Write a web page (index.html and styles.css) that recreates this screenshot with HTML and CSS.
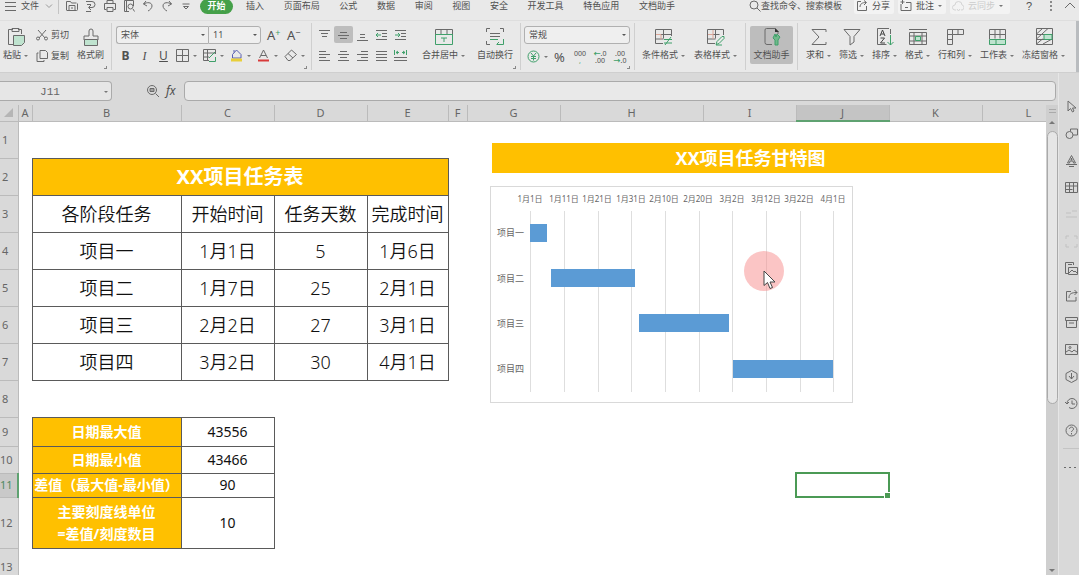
FILE: index.html
```
<!DOCTYPE html>
<html lang="zh-CN">
<head>
  <meta charset="UTF-8" />
  <meta name="viewport" content="width=device-width, initial-scale=1.0"/>
  <title>XX项目任务表</title>
  <link rel="stylesheet" href="styles.css">
</head>
<body>
  <div class="app">

    <header class="menu-bar">
      <button class="file-btn">
        <svg class="icon" width="12" height="12" viewBox="0 0 12 12"><path d="M0 2.500h11M0 6.500h11M0 10.500h11"/></svg>
        文件
        <svg class="icon light" width="8" height="8" viewBox="0 0 8 8"><path d="M1 2.500l3 3 3-3"/></svg>
      </button>
      <div class="quick-bar">
        <button aria-label="打开"><svg class="icon" width="12" height="12" viewBox="0 0 12 12"><path d="M.5 10V1.500h4l1 1.500h5M.5 10.500h10a1 1 0 0 0 1-1V3.500M3 10.500V5.500h6v5M5 8h2"/></svg></button>
        <button aria-label="输出"><svg class="icon" width="12" height="12" viewBox="0 0 12 12"><path d="M1 1.500h6a3 3 0 0 1 0 6H4M2 4.500h4M6 5L3.500 7.500 6 10M1 11.500h5"/></svg></button>
        <button aria-label="打印"><svg class="icon" width="12" height="12" viewBox="0 0 12 12"><path d="M3 3.500v-3h6v3M2.500 9.500h-2v-6h11v6h-2M3 7.500h6v4H3z"/></svg></button>
        <button aria-label="打印预览"><svg class="icon" width="12" height="12" viewBox="0 0 12 12"><path d="M6 11.500H1.500V.5h9V6M3.500.5v11M10 9l1.500 2.500"/><circle cx="7.500" cy="6.500" r="2.500"/></svg></button>
        <button aria-label="撤销"><svg class="icon" width="12" height="12" viewBox="0 0 12 12"><path d="M4 1L1.500 4 5 6M1.500 4C5 2 10 2 10 6c0 2-2 4-4 5"/></svg></button>
        <button aria-label="恢复"><svg class="icon" width="12" height="12" viewBox="0 0 12 12"><path d="M8 1l2.500 3L7 6M10.500 4C7 2 2 2 2 6c0 2 2 4 4 5"/></svg></button>
        <button aria-label="更多"><svg class="icon" width="12" height="12" viewBox="0 0 12 12"><path d="M2.500 4h7M3.500 6.500L6 9l2.500-2.500z"/></svg></button>
      </div>
      <button class="tab-active">开始</button>
      <nav class="tabs">
        <a href="#">插入</a>
        <a href="#">页面布局</a>
        <a href="#">公式</a>
        <a href="#">数据</a>
        <a href="#">审阅</a>
        <a href="#">视图</a>
        <a href="#">安全</a>
        <a href="#">开发工具</a>
        <a href="#">特色应用</a>
        <a href="#">文档助手</a>
      </nav>
      <div class="menu-right">
        <button class="search"><svg class="icon" width="12" height="12" viewBox="0 0 12 12"><circle cx="5" cy="5" r="4"/><path d="M8 8l3.500 3.500"/></svg>查找命令、搜索模板</button>
        <button class="chip"><svg class="icon" width="12" height="12" viewBox="0 0 12 12"><path d="M5 1.500H1.500v9h9V6M4 7c0-3 2-4.500 6-4.500M8 .5l2.500 2L8 5"/></svg>分享</button>
        <button class="chip"><svg class="icon" width="12" height="12" viewBox="0 0 12 12"><path d="M1 4v6.500h10v-8H6M5 7.500h3M2.500 0v4M.5 2h4"/></svg>批注<i class="caret"></i></button>
        <button class="chip off"><svg class="icon" width="12" height="12" viewBox="0 0 12 12"><path d="M4 10H3a2.500 2.500 0 0 1 0-5 3.500 3.500 0 0 1 7 0 2.500 2.500 0 0 1-1 5M5 9l1.500 2L8 9"/></svg>云同步<i class="caret"></i></button>
        <button class="help">?</button>
        <button class="help" aria-label="更多选项"><svg class="dots" width="4" height="12" viewBox="0 0 4 12"><circle cx="2" cy="2" r="1"/><circle cx="2" cy="6" r="1"/><circle cx="2" cy="10" r="1"/></svg></button>
        <button aria-label="收起"><svg class="icon" width="12" height="12" viewBox="0 0 12 12"><path d="M1 8l5-5 5 5"/></svg></button>
      </div>
    </header>

    <div class="ribbon">
      <section class="group clipboard">
        <button class="big"><svg class="icon" width="20" height="20" viewBox="0 0 20 20"><path d="M7 2.500H2.500v15H7M12 2.500h3.500V7M6 1.500h7v3H6z"/><path class="mint" d="M7.500 8.500h11v7l-3 3h-8z"/></svg><span>粘贴<i class="caret"></i></span></button>
        <div class="rows">
          <button class="line"><svg class="icon" width="12" height="12" viewBox="0 0 12 12"><path d="M2 1l7 8M10 1L3 9"/><circle cx="2" cy="9.500" r="1.500"/><circle cx="10" cy="9.500" r="1.500"/></svg>剪切</button>
          <button class="line"><svg class="icon" width="12" height="12" viewBox="0 0 12 12"><path d="M4 .5h5.500l2 2v6H4zM2.500 3H1v8.500h7V10"/></svg>复制</button>
        </div>
        <button class="big"><svg class="icon" width="20" height="20" viewBox="0 0 20 20"><path d="M8 9V4a2 2 0 0 1 4 0v5h5v4H3V9z"/><path class="mint" d="M3.500 12.500h13v6h-13z"/></svg><span>格式刷</span></button>
        <i class="corner"></i>
      </section>

      <section class="group font">
        <div class="rows">
          <div class="row">
            <div class="combo">
              <select class="font-name" aria-label="字体"><option>宋体</option></select>
              <select class="font-size" aria-label="字号"><option>11</option></select>
            </div>
            <button class="letter">A<sup class="plus">+</sup></button>
            <button class="letter">A<sup>−</sup></button>
          </div>
          <div class="row tools">
            <button class="bold">B</button>
            <button class="italic">I</button>
            <button class="under">U</button>
            <button class="drop" aria-label="边框"><svg class="icon" width="13" height="13" viewBox="0 0 13 13"><path d="M.5.5h12v12H.5zM6.500.5v12M.5 6.500h12"/></svg><i class="caret"></i></button>
            <button class="drop" aria-label="绘图边框"><svg class="icon" width="13" height="13" viewBox="0 0 13 13"><path d="M12.500 5V.5H.5v11H6M.5 4h12M.5 8H6M4.500.5v11"/><path class="green" d="M6 9l6-6M6 12.500h6.500V8"/></svg><i class="caret"></i></button>
            <button class="drop" aria-label="填充颜色"><svg class="icon" width="13" height="13" viewBox="0 0 13 13"><path class="blue" d="M2.500 5.500L6.500 1l4.500 4.500V9h-8.500zM4 3.500V1"/><path class="gold" d="M1 11h11"/></svg><i class="caret"></i></button>
            <button class="drop" aria-label="字体颜色"><svg class="icon" width="13" height="13" viewBox="0 0 13 13"><path d="M2.500 9l4-8 4 8M4 6.500h5"/><path class="red" d="M1 11.500h11"/></svg><i class="caret"></i></button>
            <button class="drop" aria-label="清除"><svg class="icon" width="13" height="13" viewBox="0 0 13 13"><path d="M1 7.500L7.500 1l5 4.500-6.500 6H4zM4 4.500L9 9"/></svg><i class="caret"></i></button>
          </div>
        </div>
        <i class="corner"></i>
      </section>

      <section class="group align">
        <div class="rows">
          <div class="row">
            <button class="cell-btn" aria-label="顶端对齐"><svg class="icon" width="11" height="12" viewBox="0 0 11 12"><path d="M0 1.500h11M2 4.500h7M3 7.500h5"/></svg></button>
            <button class="cell-btn on" aria-label="垂直居中"><svg class="icon" width="11" height="12" viewBox="0 0 11 12"><path d="M2 3.500h7M0 6.500h11M2 9.500h7"/></svg></button>
            <button class="cell-btn" aria-label="底端对齐"><svg class="icon" width="11" height="12" viewBox="0 0 11 12"><path d="M3 5.500h5M3 8.500h5M0 11.500h11"/></svg></button>
            <button class="cell-btn" aria-label="减少缩进"><svg class="icon" width="11" height="12" viewBox="0 0 11 12"><path d="M0 1.500h11M6 4.500h5M6 7.500h5M0 10.500h11"/><path class="green" d="M0 6h5M2 4L0 6l2 2"/></svg></button>
            <button class="cell-btn" aria-label="增加缩进"><svg class="icon" width="11" height="12" viewBox="0 0 11 12"><path d="M0 1.500h11M6 4.500h5M6 7.500h5M0 10.500h11"/><path class="green" d="M0 6h5M3 4l2 2-2 2"/></svg></button>
          </div>
          <div class="row">
            <button class="cell-btn" aria-label="左对齐"><svg class="icon" width="11" height="12" viewBox="0 0 11 12"><path d="M0 1.500h7M0 4.500h11M0 7.500h7M0 10.500h11"/></svg></button>
            <button class="cell-btn" aria-label="居中"><svg class="icon" width="11" height="12" viewBox="0 0 11 12"><path d="M2 1.500h7M0 4.500h11M2 7.500h7M0 10.500h11"/></svg></button>
            <button class="cell-btn" aria-label="右对齐"><svg class="icon" width="11" height="12" viewBox="0 0 11 12"><path d="M4 1.500h7M0 4.500h11M4 7.500h7M0 10.500h11"/></svg></button>
            <button class="cell-btn" aria-label="两端对齐"><svg class="icon" width="11" height="12" viewBox="0 0 11 12"><path d="M0 1.500h11M0 4.500h11M0 7.500h11M0 10.500h11"/></svg></button>
            <button class="cell-btn" aria-label="分散对齐"><svg class="icon" width="13" height="12" viewBox="0 0 13 12"><path d="M0 7.500h13M0 10.500h13"/><path class="green" d="M.5 0v5M12.500 0v5M2 2.500h3M8 2.500h3M4 1L2 2.500 4 4M9 1l2 1.500L9 4"/></svg></button>
          </div>
        </div>
        <button class="big"><svg class="icon" width="20" height="20" viewBox="0 0 20 20"><path d="M1.500 8V2.500h17V8M7 2.500v5M13 2.500v5"/><path class="green" d="M1.500 7.500h17v10h-17zM7 11h6M10 11v4"/></svg><span>合并居中<i class="caret"></i></span></button>
        <button class="big"><svg class="icon" width="20" height="20" viewBox="0 0 20 20"><path d="M1.500 5V1.500H5M15 1.500h3.500V5M1.500 14v3.500H5M5 6.500h10M5 9.500h10"/><path class="green" d="M5 12.500h8M18.500 12v5.500H12M14 15l-2.500 2.500"/></svg><span>自动换行</span></button>
        <i class="corner"></i>
      </section>

      <section class="group number">
        <div class="rows">
          <select class="format" aria-label="数字格式"><option>常规</option></select>
          <div class="row tools">
            <button class="drop" aria-label="货币"><svg class="icon" width="13" height="13" viewBox="0 0 13 13"><g class="green"><circle cx="6.500" cy="6.500" r="5.500"/><path d="M4 3l2.500 3L9 3M6.500 6v4.500M4 6.500h5M4 8.500h5"/></g></svg><i class="caret"></i></button>
            <button class="percent">%</button>
            <button class="digits"><span>000</span><span class="green-text">,</span></button>
            <button class="digits"><span><b class="green-text">←</b>.0</span><span>.00</span></button>
            <button class="digits"><span>.00</span><span><b class="green-text">→</b>.0</span></button>
          </div>
        </div>
        <i class="corner"></i>
      </section>

      <section class="group wide">
        <button class="big"><svg class="icon" width="20" height="20" viewBox="0 0 20 20"><path d="M9 16.500H1.500v-14h16V9M1.500 7.500h16M1.500 12h8M9.500 2.500v9"/><path class="coral" d="M2 7.500h5v5"/><path class="green" d="M10 12.500h8M10 16h8M17 10l-6 8"/></svg><span>条件格式<i class="caret"></i></span></button>
        <button class="big"><svg class="icon" width="20" height="20" viewBox="0 0 20 20"><path d="M9 16.500H1.500v-14h16V8M1.500 7.500h12M1.500 12h8M9.500 2.500v9"/><path class="coral" d="M7 3v9M2 7.500h5"/><path class="green" d="M10 17.500l1-3 5-5h2v2l-5 5zM10 18h6"/></svg><span>表格样式<i class="caret"></i></span></button>
      </section>

      <section class="group helper">
        <button class="big on"><svg class="icon" width="20" height="20" viewBox="0 0 20 20"><path d="M10 17.500H5a2 2 0 0 1-2-2V3a1.500 1.500 0 0 1 1.500-1.500H13l3 3V7"/><path class="dark" d="M13 1v4h4z"/><path class="leaf" d="M13 18v-5l-2-2 2-4 1 3 1-3 3 3-2 3v5z"/></svg><span>文档助手</span></button>
      </section>

      <section class="group last">
        <button class="big"><svg class="icon" width="20" height="20" viewBox="0 0 20 20"><path d="M17 5V2.500H3l7 7.500-7 7.500h14V15"/></svg><span>求和<i class="caret"></i></span></button>
        <button class="big"><svg class="icon" width="20" height="20" viewBox="0 0 20 20"><path d="M2 2.500h16l-6 7V15l-4 3V9.500z"/></svg><span>筛选<i class="caret"></i></span></button>
        <button class="big"><svg class="icon" width="20" height="20" viewBox="0 0 20 20"><path d="M14 1.500H2.500v16h9M15.500 2v5"/><path class="strong" d="M5 9l2.500-6L10 9M6 7h3M5.500 11h4l-4 5h4.500"/><path class="green" d="M15.500 8v10M12.500 15l3 3 3-3"/></svg><span>排序<i class="caret"></i></span></button>
        <button class="big"><svg class="icon" width="20" height="20" viewBox="0 0 20 20"><path d="M1 2.500h18M1.500 5.500h17v12h-17zM1.500 9h17M1.500 14h17M6 5.500v12M14 5.500v12"/><path class="mint green" d="M7.500 9.500h5v4h-5z"/></svg><span>格式<i class="caret"></i></span></button>
        <button class="big"><svg class="icon" width="20" height="20" viewBox="0 0 20 20"><path d="M2.500 2.500h16v5h-11v10h-5zM7.500 2.500v5h-5M13 2.500v5M2.500 12.500h5"/></svg><span>行和列<i class="caret"></i></span></button>
        <button class="big"><svg class="icon" width="20" height="20" viewBox="0 0 20 20"><path d="M2.500 12V2.500h16V12M2.500 7.500h16M8 2.500v9M13 2.500v9"/><path class="mint green" d="M2.500 12.500h16v5h-16zM9 13v4"/></svg><span>工作表<i class="caret"></i></span></button>
        <button class="big"><svg class="icon" width="20" height="20" viewBox="0 0 20 20"><path d="M2.500 1.500h16v16h-16zM2.500 7l6-5.500M2.500 12L14 1.500M2.500 17l6-5M9 17l9-5M2.500 7.500h16M2.500 12.500h16"/><path class="mint green" d="M10 7.500h8v5h-8z"/></svg><span>冻结窗格<i class="caret"></i></span></button>
      </section>
      <i class="ribbon-end"></i>
    </div>

    <div class="workspace">
      <main class="editor">
        <div class="formula-bar">
          <div class="name-box"><input type="text" value="J11" aria-label="名称框"><i class="caret"></i></div>
          <button aria-label="浏览"><svg class="icon" width="14" height="14" viewBox="0 0 14 14"><circle cx="6" cy="6" r="4.500"/><path d="M9.500 9.500L13 13M4 4.500h4v3H4zM4 6h4"/></svg></button>
          <button class="fx">fx</button>
          <input class="formula" type="text" aria-label="编辑栏">
        </div>

        <div class="sheet-area">
          <div class="sheet">
            <table class="grid">
              <colgroup>
                <col class="c-head"><col class="c-a"><col class="c-b"><col class="c-std"><col class="c-std"><col class="c-e"><col class="c-f"><col class="c-std"><col class="c-h"><col class="c-std"><col class="c-std"><col class="c-std"><col class="c-std">
              </colgroup>
              <thead>
                <tr>
                  <th class="select-all"><svg width="9" height="9" viewBox="0 0 9 9"><path d="M9 0v9H0z"/></svg></th>
                  <th>A</th><th>B</th><th>C</th><th>D</th><th>E</th><th>F</th><th>G</th><th>H</th><th>I</th><th class="current">J</th><th>K</th><th>L</th>
                </tr>
              </thead>
              <tbody>
                <tr class="r-std"><th>1</th></tr>
                <tr class="r-std"><th>2</th><td></td><td class="box title" colspan="4">XX项目任务表</td></tr>
                <tr class="r-std"><th>3</th><td></td><td class="box">各阶段任务</td><td class="box">开始时间</td><td class="box">任务天数</td><td class="box">完成时间</td></tr>
                <tr class="r-std"><th>4</th><td></td><td class="box">项目一</td><td class="box">1月1日</td><td class="box">5</td><td class="box">1月6日</td></tr>
                <tr class="r-std"><th>5</th><td></td><td class="box">项目二</td><td class="box">1月7日</td><td class="box">25</td><td class="box">2月1日</td></tr>
                <tr class="r-std"><th>6</th><td></td><td class="box">项目三</td><td class="box">2月2日</td><td class="box">27</td><td class="box">3月1日</td></tr>
                <tr class="r-std"><th>7</th><td></td><td class="box">项目四</td><td class="box">3月2日</td><td class="box">30</td><td class="box">4月1日</td></tr>
                <tr class="r-std"><th>8</th></tr>
                <tr class="r-9"><th>9</th><td></td><td class="box label">日期最大值</td><td class="box value">43556</td></tr>
                <tr class="r-10"><th>10</th><td></td><td class="box label">日期最小值</td><td class="box value">43466</td></tr>
                <tr class="r-11"><th class="current">11</th><td></td><td class="box label">差值（最大值-最小值）</td><td class="box value">90</td><td></td><td></td><td></td><td></td><td></td><td></td><td class="selected"></td></tr>
                <tr class="r-12"><th>12</th><td></td><td class="box label">主要刻度线单位<br>=差值/刻度数目</td><td class="box value">10</td></tr>
                <tr class="r-std"><th>13</th></tr>
              </tbody>
            </table>

            <!-- objects floating over the cells -->
            <div class="chart-title">XX项目任务甘特图</div>
            <svg class="chart" width="363" height="217" viewBox="0 0 363 217">
              <rect class="frame" x=".5" y=".5" width="362" height="216"/>
              <path class="lines" d="M40.500 25v181M74.500 25v181M108.500 25v181M141.500 25v181M175.500 25v181M209.500 25v181M242.500 25v181M276.500 25v181M310.500 25v181M343.500 25v181"/>
              <g class="dates">
                <text x="40" y="16">1月1日</text>
                <text x="74" y="16">1月11日</text>
                <text x="107" y="16">1月21日</text>
                <text x="141" y="16">1月31日</text>
                <text x="174" y="16">2月10日</text>
                <text x="208" y="16">2月20日</text>
                <text x="242" y="16">3月2日</text>
                <text x="276" y="16">3月12日</text>
                <text x="309" y="16">3月22日</text>
                <text x="343" y="16">4月1日</text>
              </g>
              <g class="names">
                <text x="34" y="50">项目一</text>
                <text x="34" y="96">项目二</text>
                <text x="34" y="141">项目三</text>
                <text x="34" y="186">项目四</text>
              </g>
              <g class="bars">
                <rect x="40" y="38" width="17" height="18"/>
                <rect x="61" y="83" width="84" height="18"/>
                <rect x="149" y="128" width="90" height="18"/>
                <rect x="243" y="174" width="100" height="18"/>
              </g>
            </svg>
            <div class="pointer">
              <svg width="14" height="20" viewBox="0 0 14 20"><path d="M1 1v14.500l3.500-3 2.500 6 2.500-1-2.500-5.500h5z"/></svg>
            </div>
          </div>

          <div class="scrollbar">
            <i class="split"></i>
            <i class="up"></i>
            <i class="thumb"></i>
            <i class="down"></i>
          </div>
        </div>
      </main>

      <aside class="side-bar">
        <button aria-label="选择"><svg class="icon" width="13" height="13" viewBox="0 0 13 13"><path d="M3 1v10l2.500-2.500L7.500 12l1.500-1-1.500-3H11z"/></svg></button>
        <button aria-label="形状"><svg class="icon" width="13" height="13" viewBox="0 0 13 13"><circle cx="4.500" cy="8" r="3.500"/><path d="M5.500 4.500V2h7v6H8"/></svg></button>
        <button aria-label="文字"><svg class="icon" width="13" height="13" viewBox="0 0 13 13"><path d="M2.500 9l4-7.500 4 7.500h-2l-.5-2H5L4.500 9zM6.500 4L6 6h1zM1 10.500h11M4 12.500h5"/></svg></button>
        <button aria-label="表格"><svg class="icon" width="13" height="13" viewBox="0 0 13 13"><path d="M.5 1.500h12v10H.5zM.5 5h12M.5 8.500h7M4.500 1.500v10M8.500 1.500v10"/></svg></button>
        <button class="faint" aria-label="上移"><svg class="icon" width="13" height="13" viewBox="0 0 13 13"><path d="M1 5h5M7 3h5M1 9h11"/></svg></button>
        <button class="faint" aria-label="组合"><svg class="icon" width="13" height="13" viewBox="0 0 13 13"><path d="M1 4V1h3M9 1h3v3M1 9v3h3M9 12h3V9"/></svg></button>
        <button aria-label="素材"><svg class="icon" width="13" height="13" viewBox="0 0 13 13"><path d="M3 11.500H.5V.5h8V3M3 2.500h4M3.500 5.500h9v7h-9zM4 11l3-3 2 2 1-1 2 2"/></svg></button>
        <button aria-label="分享"><svg class="icon" width="13" height="13" viewBox="0 0 13 13"><path d="M6 2.500H1.500v9.500h9.500V8M4 9c0-4 2-5.500 8-5.500M9.500 1L12 3.500 9.500 6"/></svg></button>
        <button aria-label="归档"><svg class="icon" width="13" height="13" viewBox="0 0 13 13"><path d="M.5 1.500h12v3H.5zM1.500 4.500h10v7h-10zM4 7h5"/></svg></button>
        <button aria-label="图片"><svg class="icon" width="13" height="13" viewBox="0 0 13 13"><path d="M.5 1.500h12v10H.5zM1 9l3-2 3 2 2-2 3 2"/><circle cx="5" cy="4.500" r="1"/></svg></button>
        <button aria-label="安全"><svg class="icon" width="13" height="13" viewBox="0 0 13 13"><path d="M6.500.5l5.500 3v6l-5.500 3-5.500-3v-6zM6.500 3v6M4 6l2.500 3L9 6"/></svg></button>
        <button aria-label="历史"><svg class="icon" width="13" height="13" viewBox="0 0 13 13"><path d="M2 6.500a5 5 0 1 1 2 4M0 5l2 2 2-2M7 3.500V7h3"/></svg></button>
        <button aria-label="帮助"><svg class="icon" width="13" height="13" viewBox="0 0 13 13"><circle cx="6.500" cy="6.500" r="5.500"/><path d="M4.500 5c0-2.500 4-2.500 4 0 0 1.500-2 1.500-2 3M6.500 9v1.500"/></svg></button>
        <button class="more" aria-label="更多"><svg class="icon" width="13" height="13" viewBox="0 0 13 13"><path d="M1 6.500h2M6 6.500h2M11 6.500h2"/></svg></button>
      </aside>
    </div>
  </div>
</body>
</html>
```

FILE: styles.css
```
* {
  box-sizing: border-box;
}

body {
  margin: 0;
  height: 100vh;
  overflow: hidden;
  background-color: #d9d9d9;
  color: #505050;
  font-family: "Noto Sans", "Noto Sans CJK SC", sans-serif;
  font-size: 9px;
  line-height: 12px;
}

button,
select,
input {
  margin: 0;
  padding: 0;
  border: none;
  background: none;
  color: inherit;
  font: inherit;
}

button {
  display: flex;
  align-items: center;
  flex-shrink: 0;
  white-space: nowrap;
}

.app {
  display: flex;
  flex-direction: column;
  height: 100vh;
}

.icon {
  flex-shrink: 0;
  fill: none;
  stroke: #6a6a6a;
  stroke-width: 1;
}

.icon.light { stroke: #999; }
.icon .strong { stroke: #444; }
.icon .mint { fill: #bfe3cf; }
.icon .green { stroke: #3fa06a; }
.icon .coral { stroke: #dca698; }
.icon .blue { stroke: #5a5fb0; }
.icon .gold { stroke: #e8cf3a; stroke-width: 3; }
.icon .red { stroke: #d83a3a; stroke-width: 2; }
.icon .dark { fill: #333; stroke: none; }
.icon .leaf { fill: #6fb98a; stroke: #3fa06a; }

.caret {
  display: inline-block;
  flex-shrink: 0;
  margin-left: 4px;
  border: 2px solid transparent;
  border-top-color: #777;
  border-bottom: 0;
  vertical-align: middle;
}

/* menu */
.menu-bar {
  display: flex;
  align-items: center;
  flex-shrink: 0;
  height: 28px;
  margin-top: -8px;
  background-color: #e9e9e9;
}

.file-btn {
  gap: 4px;
  width: 59px;
  height: 16px;
  padding-left: 5px;
  border-right: 1px solid #c4c4c4;
}

.file-btn .light {
  margin-left: 2px;
}

.quick-bar {
  display: flex;
  gap: 7px;
  margin: 0 8px 0 7px;
}

.tab-active {
  justify-content: center;
  width: 33px;
  height: 15px;
  border-radius: 8px;
  background-color: #45a049;
  color: #fff;
  font-weight: bold;
}

.tabs {
  display: flex;
  justify-content: space-between;
  flex: 0 0 429px;
  margin-left: 13px;
}

.tabs a {
  color: inherit;
  text-decoration: none;
  white-space: nowrap;
}

.menu-right {
  display: flex;
  align-items: center;
  gap: 4px;
  margin-left: auto;
  padding-right: 3px;
}

.search {
  margin-right: 8px;
}

.chip {
  gap: 4px;
  height: 15px;
  padding: 0 4px 0 2px;
  border-radius: 2px;
  background-color: #f3f3f3;
}

.chip .caret {
  margin-left: 0;
}

.chip.off {
  width: 60px;
  margin-right: 6px;
  color: #ccc;
}

.chip.off .icon {
  stroke: #d4d4d4;
}

.help {
  justify-content: center;
  width: 18px;
  font-family: "Liberation Sans", sans-serif;
  font-size: 11px;
}

.dots {
  fill: #6a6a6a;
}

/* ribbon */
.ribbon {
  display: flex;
  flex-shrink: 0;
  height: 53px;
  border-top: 1px solid #dedede;
  border-bottom: 1px solid #cfcfcf;
  background-color: #e9e9e9;
}

.group {
  position: relative;
  display: flex;
  align-items: flex-start;
  flex-shrink: 0;
  margin: 2px 0;
  padding: 3px 7px 0 4px;
  border-right: 1px solid #cfcfcf;
}

.big {
  flex-direction: column;
  gap: 2px;
  height: 38px;
  padding-top: 1px;
}

.big .caret {
  margin-left: 3px;
}

.rows {
  display: flex;
  flex-direction: column;
  gap: 4px;
}

.row,
.line {
  display: flex;
  align-items: center;
  height: 17px;
}

.line {
  gap: 3px;
}

.corner {
  position: absolute;
  right: 4px;
  bottom: 1px;
  width: 3px;
  height: 3px;
  border-right: 1px solid #888;
  border-bottom: 1px solid #888;
}

.clipboard {
  gap: 8px;
  width: 112px;
  padding-left: 3px;
}

.font {
  width: 200px;
}

.combo {
  display: flex;
  margin-right: 6px;
}

select {
  height: 18px;
  padding: 0 4px;
  border: 1px solid #b0b0b0;
  border-radius: 3px;
  appearance: none;
  background: #efefef url("data:image/svg+xml,%3Csvg xmlns='http://www.w3.org/2000/svg' width='4' height='2'%3E%3Cpath d='M0 0h4L2 2z' fill='%23555'/%3E%3C/svg%3E") no-repeat right 3px center;
}

.font-name {
  width: 92px;
  border-right: none;
  border-radius: 3px 0 0 3px;
}

.font-size {
  width: 53px;
  border-radius: 0 3px 3px 0;
}

.format {
  width: 106px;
}

.letter {
  width: 20px;
  font-size: 13px;
}

.letter sup {
  font-size: 9px;
  line-height: 8px;
  align-self: flex-start;
}

.letter .plus,
.green-text {
  color: #3fa06a;
}

.tools {
  gap: 6px;
  padding-left: 3px;
}

.drop {
  width: 21px;
}

.bold,
.italic,
.under {
  justify-content: center;
  width: 13px;
  font-size: 12px;
}

.bold { font-weight: bold; }
.italic { font-family: "Liberation Serif", serif; font-style: italic; }
.under { text-decoration: underline; }

.align {
  gap: 12px;
  width: 209px;
  padding-left: 3px;
}

.cell-btn {
  justify-content: center;
  width: 19px;
  height: 17px;
}

.on {
  border-radius: 2px;
  background-color: #bdbdbd;
}

.number {
  width: 114px;
  padding-left: 3px;
}

.percent {
  width: 13px;
  font-size: 13px;
}

.digits {
  flex-direction: column;
  width: 14px;
  font-size: 7px;
  line-height: 7px;
}

.wide {
  gap: 9px;
  width: 111px;
  padding-left: 7px;
}

.helper {
  width: 52px;
  padding-left: 4px;
}

.helper .big {
  align-items: center;
  width: 43px;
}

.last {
  flex: 1;
  gap: 8px;
  padding-left: 8px;
  border-right: none;
}

.ribbon-end {
  width: 3px;
  background-color: #b9bcbf;
}

/* formula bar */
.workspace {
  display: flex;
  flex: 1;
  min-height: 0;
}

.editor {
  display: flex;
  flex-direction: column;
  flex: 1;
  min-width: 0;
}

.formula-bar {
  display: flex;
  align-items: center;
  flex-shrink: 0;
  height: 32px;
  padding: 3px 2px 0 0;
}

.name-box {
  display: flex;
  align-items: center;
  width: 112px;
  height: 20px;
  margin-right: 34px;
  padding: 2px 3px 0 0;
  border: 1px solid #aaa;
  border-left: none;
  border-radius: 0 4px 4px 0;
  background-color: #e6e6e6;
}

.name-box input {
  flex: 1;
  min-width: 0;
  color: #666;
  font-family: "Liberation Mono", monospace;
  font-size: 11px;
  text-align: center;
}

.fx {
  width: 24px;
  padding-left: 6px;
  font-size: 12px;
  font-style: italic;
}

.formula {
  flex: 1;
  height: 20px;
  padding: 0 6px;
  border: 1px solid #aaa;
  border-radius: 4px;
  background-color: #e9e9e9;
}

/* sheet */
.sheet-area {
  display: flex;
  flex: 1;
  min-height: 0;
}

.sheet {
  position: relative;
  flex: 1;
  min-width: 0;
  overflow: hidden;
  background-color: #fff;
}

.grid {
  width: 1075px;
  table-layout: fixed;
  border-collapse: collapse;
  color: #111;
  font-size: 18px;
  font-weight: 350;
  line-height: 22px;
  text-align: center;
}

.c-head { width: 18px; }
.c-a { width: 14px; }
.c-b { width: 149px; }
.c-std { width: 93px; }
.c-e { width: 81px; }
.c-f { width: 19px; }
.c-h { width: 143px; }

.grid th,
.grid td {
  padding: 0;
  white-space: nowrap;
}

.grid th {
  border-right: 1px solid #bbb;
  border-bottom: 1px solid #bbb;
  background-color: #d9d9d9;
  color: #666;
  font-size: 11px;
  font-weight: normal;
  line-height: 14px;
}

.grid thead tr { height: 16px; }
.grid tbody th { padding-right: 7px; }
.r-std { height: 37px; }
.r-9 { height: 29px; }
.r-10 { height: 27px; }
.r-11 { height: 24px; }
.r-12 { height: 51px; }

.grid .select-all {
  padding-left: 4px;
}

.select-all svg {
  display: block;
  fill: #b5b5b5;
}

.grid thead .current {
  border-bottom: 2px solid #5fa271;
  background-color: #c4c4c4;
}

.grid tbody .current {
  border-right: 2px solid #5fa271;
  background-color: #c9c9c9;
  color: #4f8a62;
}

.grid .box {
  border: 1px solid #5a5a5a;
}

.grid .title {
  background-color: #ffc000;
  color: #fff;
  font-size: 20px;
  font-weight: bold;
}

.grid .label {
  background-color: #ffc000;
  color: #fff;
  font-size: 14px;
  font-weight: bold;
}

.grid .value {
  font-size: 14px;
  font-weight: normal;
}

.selected {
  position: relative;
  outline: 2px solid #4b9a55;
  outline-offset: -1px;
}

.selected::after {
  content: "";
  position: absolute;
  right: -2px;
  bottom: -2px;
  width: 5px;
  height: 5px;
  border: 1px solid #fff;
  background-color: #4b9a55;
}

/* floating objects */
.chart-title {
  position: absolute;
  top: 38px;
  left: 492px;
  width: 517px;
  height: 30px;
  background-color: #ffc000;
  color: #fff;
  font-size: 18px;
  font-weight: bold;
  line-height: 30px;
  text-align: center;
}

.chart {
  position: absolute;
  top: 81px;
  left: 490px;
  fill: #666;
}

.chart .frame { fill: #fff; stroke: #d9d9d9; }
.chart .lines { stroke: #dedede; }
.chart .dates { font-size: 8px; text-anchor: middle; }
.chart .names { font-size: 9px; text-anchor: end; }
.chart .bars { fill: #5b9bd5; }

.pointer {
  position: absolute;
  top: 146px;
  left: 744px;
  width: 40px;
  height: 40px;
  padding: 19px 0 0 19px;
  border-radius: 50%;
  background-color: rgba(248, 140, 140, 0.5);
}

.pointer svg {
  display: block;
  fill: #fff;
  stroke: #444;
}

/* scrollbar */
.scrollbar {
  display: flex;
  flex-direction: column;
  align-items: center;
  width: 12px;
  background-color: #cfcfcf;
}

.split {
  width: 7px;
  height: 4px;
  margin: 4px 0 8px;
  border-top: 1px solid #aaa;
  border-bottom: 1px solid #aaa;
}

.up,
.down {
  border: 3px solid transparent;
}

.up { border-bottom-color: #777; border-top: 0; }
.down { border-top-color: #777; border-bottom: 0; margin: auto 0 3px; }

.thumb {
  width: 11px;
  height: 58%;
  margin-top: 7px;
  border: 1px solid #aaa;
  border-radius: 6px;
  background-color: #e6e6e6;
}

/* side bar */
.side-bar {
  display: flex;
  flex-direction: column;
  align-items: center;
  width: 21px;
  padding: 20px 0 0 5px;
  border-left: 1px solid #e6e6e6;
  background-color: #d9d9d9;
}

.side-bar button {
  height: 27px;
}

.side-bar .faint {
  opacity: 0.2;
}

.side-bar .more {
  width: 18px;
  height: 38px;
  margin-top: 4px;
  border-top: 1px solid #c4c4c4;
}
```
